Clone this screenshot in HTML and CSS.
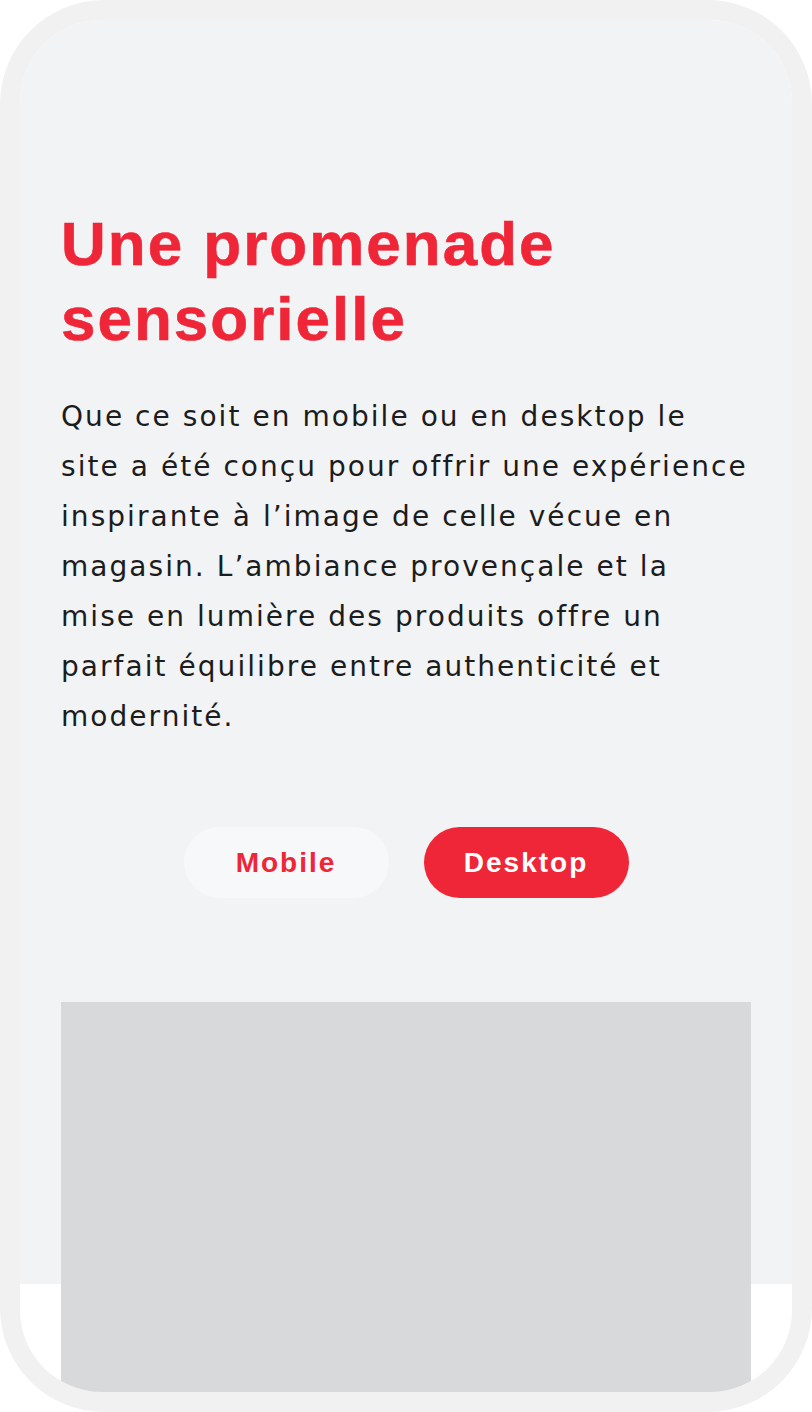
FILE: index.html
```html
<!DOCTYPE html>
<html lang="fr">
<head>
<meta charset="utf-8">
<title>Une promenade sensorielle</title>
<link rel="stylesheet" href="styles.css">
</head>
<body>
<div class="device">
  <div class="screen">
    <section class="hero">
      <h1 class="title">Une promenade<br>sensorielle</h1>
      <p class="lead">Que ce soit en mobile ou en desktop le<br>site a été conçu pour offrir une expérience<br>inspirante à l’image de celle vécue en<br>magasin. L’ambiance provençale et la<br>mise en lumière des produits offre un<br>parfait équilibre entre authenticité et<br>modernité.</p>
      <div class="toggle">
        <button class="btn btn-light" type="button">Mobile</button>
        <button class="btn btn-red" type="button">Desktop</button>
      </div>
      <div class="preview"></div>
    </section>
  </div>
</div>
</body>
</html>
```
FILE: styles.css
```css
html, body {
  margin: 0;
  padding: 0;
  background: #ffffff;
}

.device {
  width: 812px;
  height: 1412px;
  box-sizing: border-box;
  padding: 20px;
  background: #f1f1f1;
  border-radius: 104px;
}

.screen {
  height: 1372px;
  border-radius: 82px;
  overflow: hidden;
  background: #ffffff;
}

.hero {
  display: flow-root;
  background: #f2f3f5;
  padding: 186px 41px 0;
}

.title {
  margin: 0;
  font-family: "Liberation Sans", Arial, sans-serif;
  font-weight: 700;
  font-size: 62px;
  line-height: 75px;
  letter-spacing: 2px;
  color: #ef2538;
  -webkit-text-stroke: 0.6px #ef2538;
}

.lead {
  margin: 36px 0 0;
  font-family: "DejaVu Sans", sans-serif;
  font-size: 28px;
  line-height: 50px;
  letter-spacing: 2.05px;
  color: #1c1c1c;
  white-space: nowrap;
}

.toggle {
  display: flex;
  justify-content: center;
  gap: 35px;
  margin-top: 85px;
}

.btn {
  width: 205px;
  height: 71px;
  border: none;
  border-radius: 36px;
  padding: 0;
  font-family: "Liberation Sans", Arial, sans-serif;
  font-weight: 700;
  font-size: 28px;
  letter-spacing: 2px;
  cursor: pointer;
}

.btn-light {
  background: #f7f8fa;
  color: #ef2538;
}

.btn-red {
  background: #ef2538;
  color: #ffffff;
}

.preview {
  margin-top: 104px;
  margin-bottom: -108px;
  height: 390px;
  background: #d8d9db;
}
```
